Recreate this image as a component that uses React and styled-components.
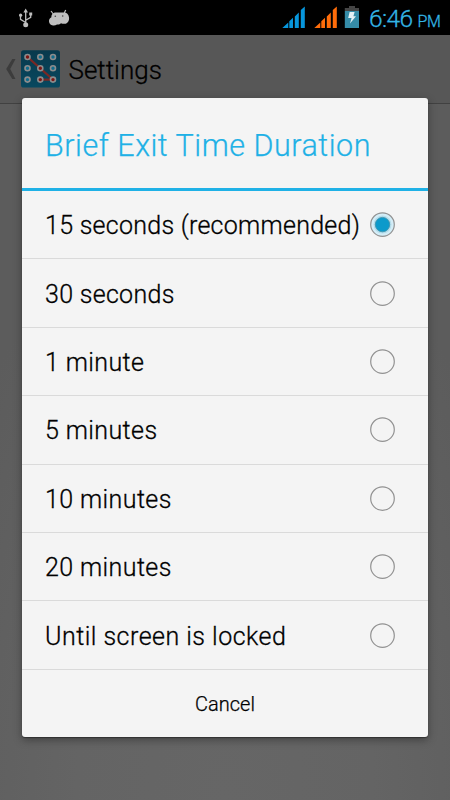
import React, { useState } from "react";
import styled, { createGlobalStyle } from "styled-components";

const GlobalStyle = createGlobalStyle`
  * {
    box-sizing: border-box;
  }
  body {
    margin: 0;
    background: #000;
    font-family: Roboto, "Liberation Sans", sans-serif;
    font-weight: 300;
  }
  button {
    font-family: inherit;
  }
`;

const Screen = styled.div`
  width: 450px;
  height: 800px;
  overflow: hidden;
  position: relative;
  display: flex;
  flex-direction: column;
  background: radial-gradient(ellipse 330px 600px at 50% 100%, #666 0%, #646464 45%, #5c5c5c 100%);
`;

const StatusBar = styled.header`
  height: 35px;
  flex: none;
  display: flex;
  align-items: flex-start;
  justify-content: space-between;
  background: #000;
`;

const StatusGroup = styled.div`
  display: flex;
`;

const Signals = styled.div`
  display: flex;
  gap: 9.2px;
  margin-right: 3.8px;
`;

const Clock = styled.div`
  width: 86px;
  padding-left: 5px;
  color: #33b5e5;
  font-size: 24.5px;
  line-height: 38px;
  letter-spacing: -0.6px;
  white-space: nowrap;
  -webkit-text-stroke: 0.3px #33b5e5;
`;

const Meridiem = styled.span`
  margin-left: 5px;
  font-size: 16px;
  letter-spacing: -0.4px;
`;

const ActionBar = styled.div`
  height: 69px;
  flex: none;
  display: flex;
  align-items: center;
  background: #575757;
  border-bottom: 1px solid #414141;
`;

const ScreenTitle = styled.h1`
  margin: 2px 0 0 8.5px;
  color: #000;
  font-size: 26px;
  font-weight: 300;
  line-height: 30px;
  -webkit-text-stroke: 0.3px #000;
`;

const Dialog = styled.div`
  position: absolute;
  left: 22px;
  top: 98px;
  width: 406px;
  height: 639px;
  display: flex;
  flex-direction: column;
  background: #f4f4f4;
  border-radius: 3px;
  box-shadow: 0 1px 1px rgba(0, 0, 0, 0.35), 0 3px 9px rgba(0, 0, 0, 0.35);
`;

const DialogTitle = styled.h2`
  height: 93px;
  flex: none;
  margin: 0;
  padding-left: 23px;
  border-bottom: 3px solid #1fb1e6;
  color: #1fb1e6;
  font-size: 30.5px;
  font-weight: 300;
  line-height: 95px;
  letter-spacing: 0.52px;
  white-space: nowrap;
  -webkit-text-stroke: 0.25px #1fb1e6;
`;

const OptionRow = styled.div`
  height: 68.4px;
  flex: none;
  display: flex;
  align-items: center;
  justify-content: space-between;
  padding: 0 32px 0 23px;
  border-bottom: 1px solid #dadada;
  cursor: pointer;
`;

const OptionLabel = styled.span`
  padding-top: 3px;
  color: #000;
  font-size: 25px;
  letter-spacing: ${props => props.$tracking || 0.4}px;
  line-height: 30px;
  white-space: nowrap;
  -webkit-text-stroke: 0.3px #000;
`;

const CancelButton = styled.button`
  flex: 1;
  padding: 2px 0 0 0;
  border: 0;
  background: none;
  color: #000;
  font-size: 20px;
  font-weight: 300;
  -webkit-text-stroke: 0.25px #000;
`;

const UsbIcon = () => (
  <svg width="40" height="35" viewBox="0 0 40 35" fill="none" stroke="#bdbdbd" strokeWidth="1.3">
    <path d="M25.7 12V24M25.7 22.5L20.5 19.3V15.5M25.7 20.3L30.7 17.3V14" />
    <path d="M25.7 8.5L28 12.5H23.4ZM29.2 12.5H32.2V15.5H29.2Z" fill="#bdbdbd" stroke="none" />
    <circle cx="20.6" cy="15.2" r="1.6" fill="#bdbdbd" stroke="none" />
    <circle cx="25.7" cy="24.8" r="2.5" fill="#bdbdbd" stroke="none" />
  </svg>
);

const DebugIcon = () => (
  <svg width="40" height="35" viewBox="40 0 40 35">
    <path
      d="M49 21.5C48.8 19.5 49.8 18 51.4 17.2C51.2 14.4 53.2 12.6 56 12.6H63.5C66.5 12.3 68.6 14.4 69 17.2C69.5 20.6 67.8 23.6 64.6 23.8C63.2 23.9 62 23.6 61 23.2C60 24.3 58.6 24.7 57 24.5C55.8 25.3 54.6 25.5 53 25.4C50.7 25.3 49.2 23.7 49 21.5Z"
      fill="#bfbfbf"
    />
    <path d="M51 11L53.3 14M65.7 10L64.3 13" stroke="#bfbfbf" strokeWidth="1.2" />
    <circle cx="55.3" cy="16.3" r="0.8" fill="#444" />
    <circle cx="62.7" cy="16" r="0.8" fill="#444" />
  </svg>
);

const SignalIcon = ({ color }) => (
  <svg width="23" height="35" viewBox="0 0 23 35" fill={color}>
    <path d="M.3 28L6.3 22.5V28ZM7.3 21.3L11 17.7V28H7.3ZM12.8 16.5L16.8 12.5V28H12.8ZM18.8 10L22.8 6.5V28H18.8Z" />
  </svg>
);

const BatteryIcon = () => (
  <svg width="23" height="35" viewBox="0 0 23 35">
    <path d="M8 6H14V8H18V11H3.8V8H8Z" fill="#454545" />
    <path d="M3.8 11H18V28H3.8Z" fill="#358ca8" />
    <path d="M8.6 12H13.6L12.4 16.2H15L9 23.6L10.6 18H7.2Z" fill="#e4f1f5" />
  </svg>
);

const BackIcon = () => (
  <svg width="21" height="30" viewBox="0 0 21 30">
    <path d="M12.3 5H15.5L10.2 15L15.5 25H12.3L6.2 15Z" fill="#3c3c3c" />
  </svg>
);

const patternDots = [
  { x: 6.5, y: 7, on: true },
  { x: 19.3, y: 7 },
  { x: 32, y: 7 },
  { x: 6.5, y: 18.3 },
  { x: 19.3, y: 18.3, on: true },
  { x: 32, y: 18.3 },
  { x: 6.5, y: 29.6 },
  { x: 19.3, y: 29.6, on: true },
  { x: 32, y: 29.6, on: true }
];

const AppIcon = () => (
  <svg width="39" height="38" viewBox="0 0 39 38">
    <defs>
      <linearGradient id="tile" x1="0" y1="0" x2="0" y2="1">
        <stop offset="0" stopColor="#08394c" />
        <stop offset="1" stopColor="#08485f" />
      </linearGradient>
    </defs>
    <rect y="0.3" width="39" height="37.2" rx="2.6" fill="url(#tile)" />
    <path d="M6.5 7L32 29.6H19.3" fill="none" stroke="#7b2824" strokeWidth="2.2" />
    {patternDots.map(dot => (
      <circle
        key={`${dot.x}-${dot.y}`}
        cx={dot.x}
        cy={dot.y}
        r="2.5"
        fill={dot.on ? "#7c1512" : "#0e6d8e"}
        stroke="#8c8c8c"
        strokeWidth="1.6"
      />
    ))}
  </svg>
);

const Radio = ({ checked }) => (
  <svg width="27" height="27" viewBox="0 0 27 27">
    <circle
      cx="13.5"
      cy="13.6"
      r="11.8"
      fill={checked ? "#d4edf7" : "none"}
      stroke="#929292"
      strokeWidth="1.2"
    />
    {checked && (
      <>
        <circle cx="13.5" cy="13.6" r="9" fill="#b4dcea" />
        <circle cx="13.5" cy="13.6" r="7.2" fill="#0c9acb" stroke="#3e91aa" strokeWidth="0.8" />
      </>
    )}
  </svg>
);

const durations = [
  { label: "15 seconds (recommended)", tracking: 0.27 },
  { label: "30 seconds", tracking: 0.3 },
  { label: "1 minute" },
  { label: "5 minutes" },
  { label: "10 minutes" },
  { label: "20 minutes" },
  { label: "Until screen is locked", tracking: 0.48 }
];

const App = () => {
  const [selected, setSelected] = useState(durations[0].label);

  return (
    <Screen>
      <GlobalStyle />
      <StatusBar>
        <StatusGroup>
          <UsbIcon />
          <DebugIcon />
        </StatusGroup>
        <StatusGroup>
          <Signals>
            <SignalIcon color="#0796dc" />
            <SignalIcon color="#ff6d0a" />
          </Signals>
          <BatteryIcon />
          <Clock>
            6:46<Meridiem>PM</Meridiem>
          </Clock>
        </StatusGroup>
      </StatusBar>
      <ActionBar>
        <BackIcon />
        <AppIcon />
        <ScreenTitle>Settings</ScreenTitle>
      </ActionBar>
      <Dialog role="dialog">
        <DialogTitle>Brief Exit Time Duration</DialogTitle>
        {durations.map(({ label, tracking }) => (
          <OptionRow key={label} onClick={() => setSelected(label)}>
            <OptionLabel $tracking={tracking}>{label}</OptionLabel>
            <Radio checked={label === selected} />
          </OptionRow>
        ))}
        <CancelButton>Cancel</CancelButton>
      </Dialog>
    </Screen>
  );
};

export default App;
